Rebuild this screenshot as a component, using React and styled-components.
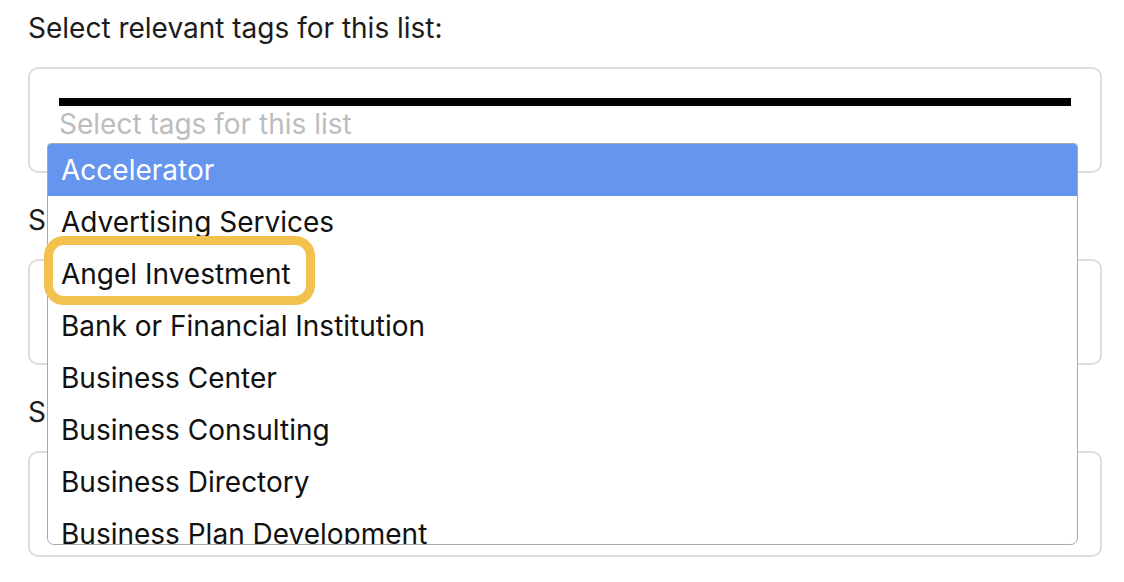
import React from 'react';
import styled, { createGlobalStyle } from 'styled-components';

const GlobalStyle = createGlobalStyle`
  body {
    margin: 0;
    background: #ffffff;
    font-family: Inter, "Noto Sans", sans-serif;
    color: #1c1c1c;
  }
`;

const TAGS = [
  'Accelerator',
  'Advertising Services',
  'Angel Investment',
  'Bank or Financial Institution',
  'Business Center',
  'Business Consulting',
  'Business Directory',
  'Business Plan Development',
  'Business Support',
];

const Page = styled.div`
  padding: 11px 22px 0 28px;
  width: 1074px;
`;

const Field = styled.div`
  display: flex;
  flex-direction: column;
  margin-bottom: 30px;
`;

const Label = styled.label`
  font-size: 28px;
  line-height: 34px;
  margin-bottom: 22px;
  color: #1c1c1c;
`;

const Box = styled.div`
  position: relative;
  height: 106px;
  box-sizing: border-box;
  border: 2px solid #dddddd;
  border-radius: 10px;
  padding: 29px 29px 0 29px;
`;

const Bar = styled.div`
  height: 8px;
  background: #000000;
`;

const Placeholder = styled.div`
  font-size: 28px;
  line-height: 34px;
  margin-top: 1px;
  color: #bdbdbd;
`;

const Dropdown = styled.div`
  position: absolute;
  top: 74px;
  left: 17px;
  width: 1031px;
  height: 402px;
  z-index: 10;
`;

const List = styled.ul`
  list-style: none;
  margin: 0;
  padding: 0;
  height: 100%;
  box-sizing: border-box;
  overflow: hidden;
  background: #ffffff;
  border: 1.5px solid #a9a9a9;
  border-radius: 4px 4px 7px 7px;
`;

const Option = styled.li`
  height: 52px;
  padding-left: 13px;
  display: flex;
  align-items: center;
  font-size: 28px;
  color: ${(p) => (p.$active ? '#ffffff' : '#111111')};
  background: ${(p) => (p.$active ? '#6595ef' : 'transparent')};
`;

const Highlight = styled.div`
  position: absolute;
  left: -3px;
  top: 93px;
  width: 271px;
  height: 69px;
  box-sizing: border-box;
  border: 9px solid #f2c14e;
  border-radius: 20px;
  pointer-events: none;
`;

const TagField = ({ label, open }) => (
  <Field>
    <Label>{label}</Label>
    <Box>
      {open && (
        <>
          <Bar />
          <Placeholder>Select tags for this list</Placeholder>
          <Dropdown>
            <List>
              {TAGS.map((tag, i) => (
                <Option key={tag} $active={i === 0}>
                  {tag}
                </Option>
              ))}
            </List>
            <Highlight />
          </Dropdown>
        </>
      )}
    </Box>
  </Field>
);

export default function App() {
  return (
    <>
      <GlobalStyle />
      <Page>
        <TagField label="Select relevant tags for this list:" open />
        <TagField label="Select the industry for this list:" />
        <TagField label="Select the region for this list:" />
      </Page>
    </>
  );
}
